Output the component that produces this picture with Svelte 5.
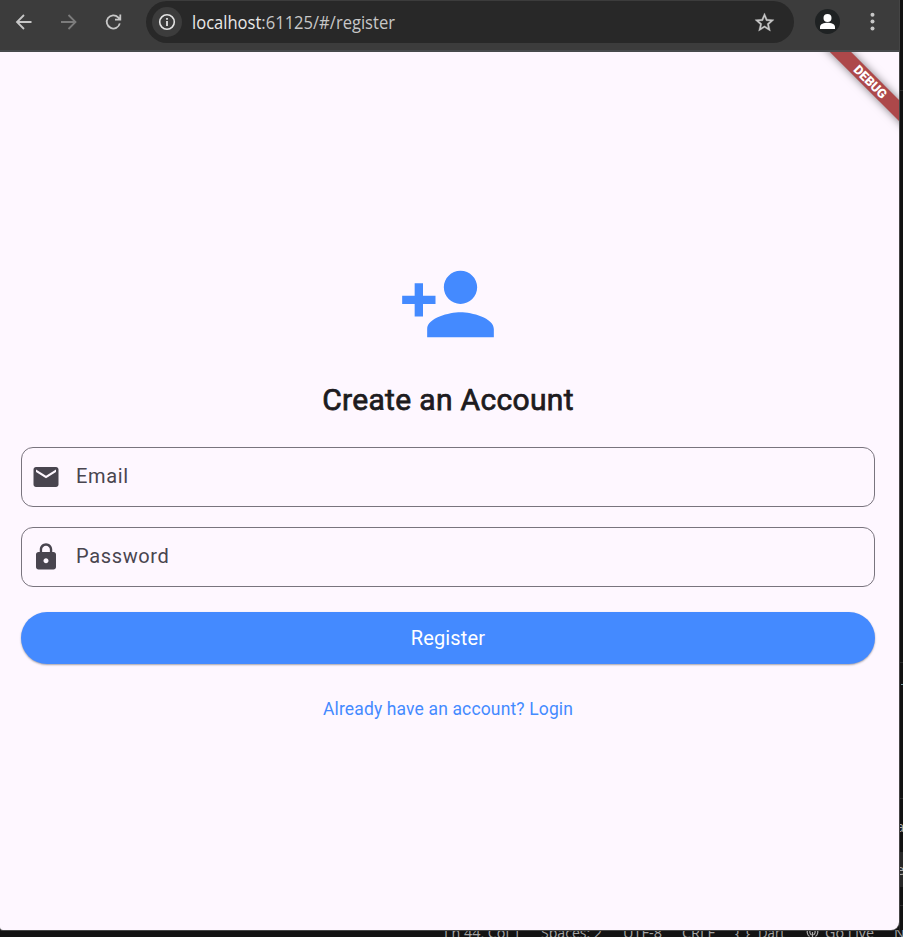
<script>
  const status = [
    { text: 'Ln 44, Col 1', x: 444, w: 77 },
    { text: 'Spaces: 2', x: 541, w: 61 },
    { text: 'UTF-8', x: 623, w: 39 },
    { text: 'CRLF', x: 682, w: 33 },
    { text: '{ }', x: 735, w: 15 },
    { text: 'Dart', x: 758, w: 27 },
    { text: 'Go Live', x: 825, w: 49 },
    { text: 'N', x: 894, w: 11 }
  ];
</script>

<div class="desktop">
  <div class="edge">
    <span class="line" style="top:90px"></span>
    <span class="line" style="top:662px"></span>
    <span class="dash"></span>
    <span class="line" style="top:798px"></span>
    <span class="shade"></span>
    <span class="line" style="top:905px"></span>
    <span class="frag" style="top:816px">a</span>
    <span class="frag" style="top:859px">e</span>
  </div>
  <svg class="status" width="903" height="7" viewBox="0 930 903 7">
    {#each status as s}
      <text x={s.x} y="938" textLength={s.w} lengthAdjust="spacingAndGlyphs">{s.text}</text>
    {/each}
    <g fill="none" stroke="#aaa" stroke-width="1.2">
      <path d="M808.500 928.500a5.500 5.500 0 0 0 1 8M816.500 928.500a5.500 5.500 0 0 1-1 8M810.500 930a3.500 3.500 0 0 0 1 5M814.500 930a3.500 3.500 0 0 1-1 5M812.500 932v6" />
    </g>
  </svg>

  <div class="window">
    <header>
      <svg class="nav" viewBox="0 0 18 18"><path d="M16.500 9H2M9 2 2 9l7 7" /></svg>
      <svg class="nav dim" viewBox="0 0 18 18"><path d="M1 9H15.500M8.500 2l7 7-7 7" /></svg>
      <svg class="nav" viewBox="0 0 18 18"><path d="M14.800 10.400A6.600 6.600 0 1 1 13.200 4.400L15 6.500M15.300 1.500V6.700h-5.300" /></svg>
      <div class="address">
        <span class="info">
          <svg width="18" height="18" viewBox="0 0 18 18"><circle cx="9" cy="9" r="7.300" fill="none" stroke="#e3e3e3" stroke-width="1.600" /><path d="M8.100 8h1.800v5H8.100zM8.100 5h1.800v1.700H8.100z" fill="#e3e3e3" /></svg>
        </span>
        <svg class="url" width="206" height="28"><text x="0" y="20.500" textLength="203" lengthAdjust="spacingAndGlyphs"><tspan fill="#e8e8e8">localhost</tspan>:61125/#/register</text></svg>
        <svg class="star" width="23" height="23" viewBox="0 0 24 24"><path fill="#c7c7c7" stroke="#c7c7c7" stroke-width=".3" d="M22 9.240l-7.190-.62L12 2 9.190 8.630 2 9.240l5.460 4.730L5.820 21 12 17.270 18.180 21l-1.630-7.030L22 9.240zM12 15.400l-3.760 2.270 1-4.280-3.320-2.880 4.380-.38L12 6.100l1.710 4.040 4.380.38-3.320 2.880 1 4.280L12 15.400z" /></svg>
      </div>
      <svg class="avatar" width="25" height="25" viewBox="0 0 25 25"><circle cx="12.500" cy="12.500" r="12.500" fill="#1f2223" /><circle cx="12.500" cy="9" r="4" fill="#fff" /><path fill="#fff" d="M5 20v-2c0-3 4-4.200 7.500-4.200S20 15 20 18v2z" /></svg>
      <svg class="dots" width="6" height="20" viewBox="0 0 6 20"><g fill="#c7c7c7"><circle cx="2.500" cy="2.700" r="2" /><circle cx="2.500" cy="9.600" r="2" /><circle cx="2.500" cy="16.500" r="2" /></g></svg>
    </header>

    <main>
      <div class="banner"><span>DEBUG</span></div>
      <svg class="hero" width="100" height="100" viewBox="0 0 24 24"><path fill="#448aff" d="M15 12c2.210 0 4-1.790 4-4s-1.790-4-4-4-4 1.790-4 4 1.790 4 4 4zm-9-2V7H4v3H1v2h3v3h2v-3h3v-2H6zm9 4c-2.670 0-8 1.340-8 4v2h16v-2c0-2.660-5.330-4-8-4z" /></svg>
      <h1>Create an Account</h1>
      <div class="field">
        <svg width="30" height="30" viewBox="0 0 24 24"><path d="M20 4H4c-1.100 0-1.990.9-1.990 2L2 18c0 1.100.9 2 2 2h16c1.100 0 2-.9 2-2V6c0-1.100-.9-2-2-2zm0 4l-8 5-8-5V6l8 5 8-5v2z" /></svg>
        <span>Email</span>
      </div>
      <div class="field">
        <svg width="30" height="30" viewBox="0 0 24 24"><path d="M18 8h-1V6c0-2.760-2.240-5-5-5S7 3.240 7 6v2H6c-1.100 0-2 .9-2 2v10c0 1.100.9 2 2 2h12c1.100 0 2-.9 2-2V10c0-1.100-.9-2-2-2zm-6 9c-1.100 0-2-.9-2-2s.9-2 2-2 2 .9 2 2-.9 2-2 2zm3.100-9H8.900V6c0-1.710 1.390-3.100 3.100-3.100 1.710 0 3.100 1.390 3.100 3.100v2z" /></svg>
        <span>Password</span>
      </div>
      <button class="register">Register</button>
      <button class="login">Already have an account? Login</button>
    </main>
  </div>
</div>

<style>
  :global(body) { background: #111; }
  .desktop { position: relative; width: 903px; height: 937px; overflow: hidden; background: #131313; }
  .edge { position: absolute; inset: 0 0 0 899px; background: #121212; border-left: 1px solid #252525; }
  .line { position: absolute; left: 0; right: 0; height: 1px; background: #2b2b2b; }
  .dash { position: absolute; left: 1px; right: 0; top: 684px; height: 1px; background: #779da5; }
  .shade { position: absolute; left: 0; right: 0; top: 852px; height: 35px; background: #282828; }
  .frag { position: absolute; left: -4px; font: 15px/20px "Open Sans", sans-serif; color: #aaa; }
  .status { position: absolute; left: 0; top: 930px; }
  .status text { font: 14.500px "Open Sans", sans-serif; fill: #a4a4a4; }
  .window { position: relative; width: 899px; height: 930px; border-radius: 0 0 8px 3px; overflow: hidden; background: #fef7ff; box-shadow: 0 0 0 1px #454545; }
  header { box-sizing: border-box; height: 52px; background: #3c3c3c; border-bottom: 2px solid #474a4c; display: flex; align-items: flex-start; padding-left: 15px; }
  .nav { width: 18px; height: 18px; margin: 12.500px 27px 0 0; fill: none; stroke: #c7c7c7; stroke-width: 1.800; flex: none; }
  .nav.dim { stroke: #7c7c7c; }
  .address { box-sizing: border-box; width: 648px; height: 42px; margin: 1px 0 0 -4px; border-radius: 21px; background: #282828; display: flex; align-items: center; padding: 0 18px 0 6px; flex: none; }
  .info { width: 30px; height: 30px; border-radius: 50%; background: #3c3c3c; display: flex; align-items: center; justify-content: center; }
  .url { margin-left: 10px; font: 18.300px "Open Sans", sans-serif; fill: #c7c7c7; }
  .star { margin-left: auto; margin-top: 1px; }
  .avatar { margin: 9px 0 0 21px; flex: none; }
  .dots { margin: 12px 0 0 30px; flex: none; }
  main { position: relative; box-sizing: border-box; height: 878px; padding: 202px 24px 0 21px; display: flex; flex-direction: column; align-items: center; overflow: hidden; font-family: Roboto, sans-serif; }
  .banner { position: absolute; left: 769.500px; top: 21.500px; width: 200px; height: 15px; transform: rotate(45deg); background: #ad484a; box-shadow: 0 0 8px rgba(0, 0, 0, .5); text-align: center; color: #fff; font-size: 12.750px; font-weight: 900; line-height: 15px; text-indent: 1px; }
  .hero { flex: none; display: block; }
  h1 { margin: 26px 0 0; height: 40px; line-height: 40px; font-size: 30px; font-weight: 400; color: #1d1b20; letter-spacing: .33px; -webkit-text-stroke: .75px #1d1b20; white-space: nowrap; }
  .field { box-sizing: border-box; width: 854px; height: 60px; margin-top: 20px; border: 1px solid #79747e; border-radius: 12px; display: flex; align-items: center; padding-left: 9px; flex: none; color: #49454f; font-size: 20px; letter-spacing: .65px; }
  h1 + .field { margin-top: 26.500px; }
  .field span { padding-bottom: 2px; }
  .field svg { fill: #49454f; margin-right: 15px; }
  button { font-family: Roboto, sans-serif; border: 0; padding: 0; }
  .register { width: 854px; height: 52px; margin-top: 25.500px; border-radius: 26px; background: #448aff; color: #fff; font-size: 20px; letter-spacing: .15px; box-shadow: 0 1px 2px rgba(0, 0, 0, .35); flex: none; }
  .login { margin-top: 32px; height: 26px; background: none; color: #448aff; font-size: 17.500px; letter-spacing: .14px; white-space: nowrap; }
</style>
